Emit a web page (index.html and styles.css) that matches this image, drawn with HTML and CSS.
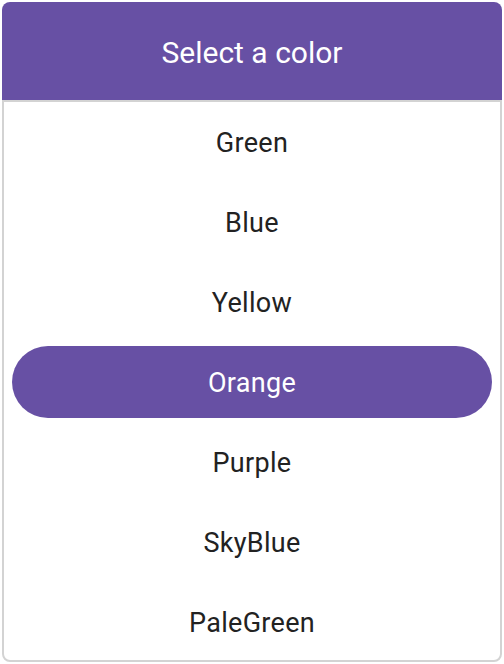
FILE: index.html
```html
<!DOCTYPE html>
<html lang="en">
<head>
    <meta charset="UTF-8">
    <meta name="viewport" content="width=device-width, initial-scale=1.0">
    <title>Select a color</title>
    <link rel="stylesheet" href="styles.css">
</head>
<body>
    <div class="picker">
        <div class="picker-header">Select a color</div>
        <ul class="color-list">
            <li class="color-item">Green</li>
            <li class="color-item">Blue</li>
            <li class="color-item">Yellow</li>
            <li class="color-item selected">Orange</li>
            <li class="color-item">Purple</li>
            <li class="color-item">SkyBlue</li>
            <li class="color-item">PaleGreen</li>
        </ul>
    </div>
</body>
</html>
```

FILE: styles.css
```css
body {
    font-family: Roboto, "Noto Sans", sans-serif;
    margin: 0;
    padding: 0;
    background: #fff;
}
.picker {
    margin: 2px;
    width: 500px;
    height: 660px;
    display: flex;
    flex-direction: column;
    overflow: hidden;
}
.picker-header {
    background-color: #6750a4;
    color: #fff;
    height: 98px;
    display: flex;
    align-items: center;
    justify-content: center;
    font-size: 30px;
    padding-top: 2px;
    box-sizing: border-box;
    border-radius: 8px 8px 0 0;
}
.color-list {
    list-style: none;
    margin: 0;
    padding: 0;
    flex: 1;
    border: 2px solid #d3d3d3;
    border-radius: 0 0 8px 8px;
    overflow: hidden;
}
.color-item {
    height: 80px;
    display: flex;
    align-items: center;
    justify-content: center;
    font-size: 27px;
    letter-spacing: 0.3px;
    padding-top: 2px;
    box-sizing: border-box;
    color: #222;
}
.color-item.selected {
    height: 72px;
    margin: 4px 8px;
    background-color: #6750a4;
    color: #fff;
    border-radius: 36px;
}
```
